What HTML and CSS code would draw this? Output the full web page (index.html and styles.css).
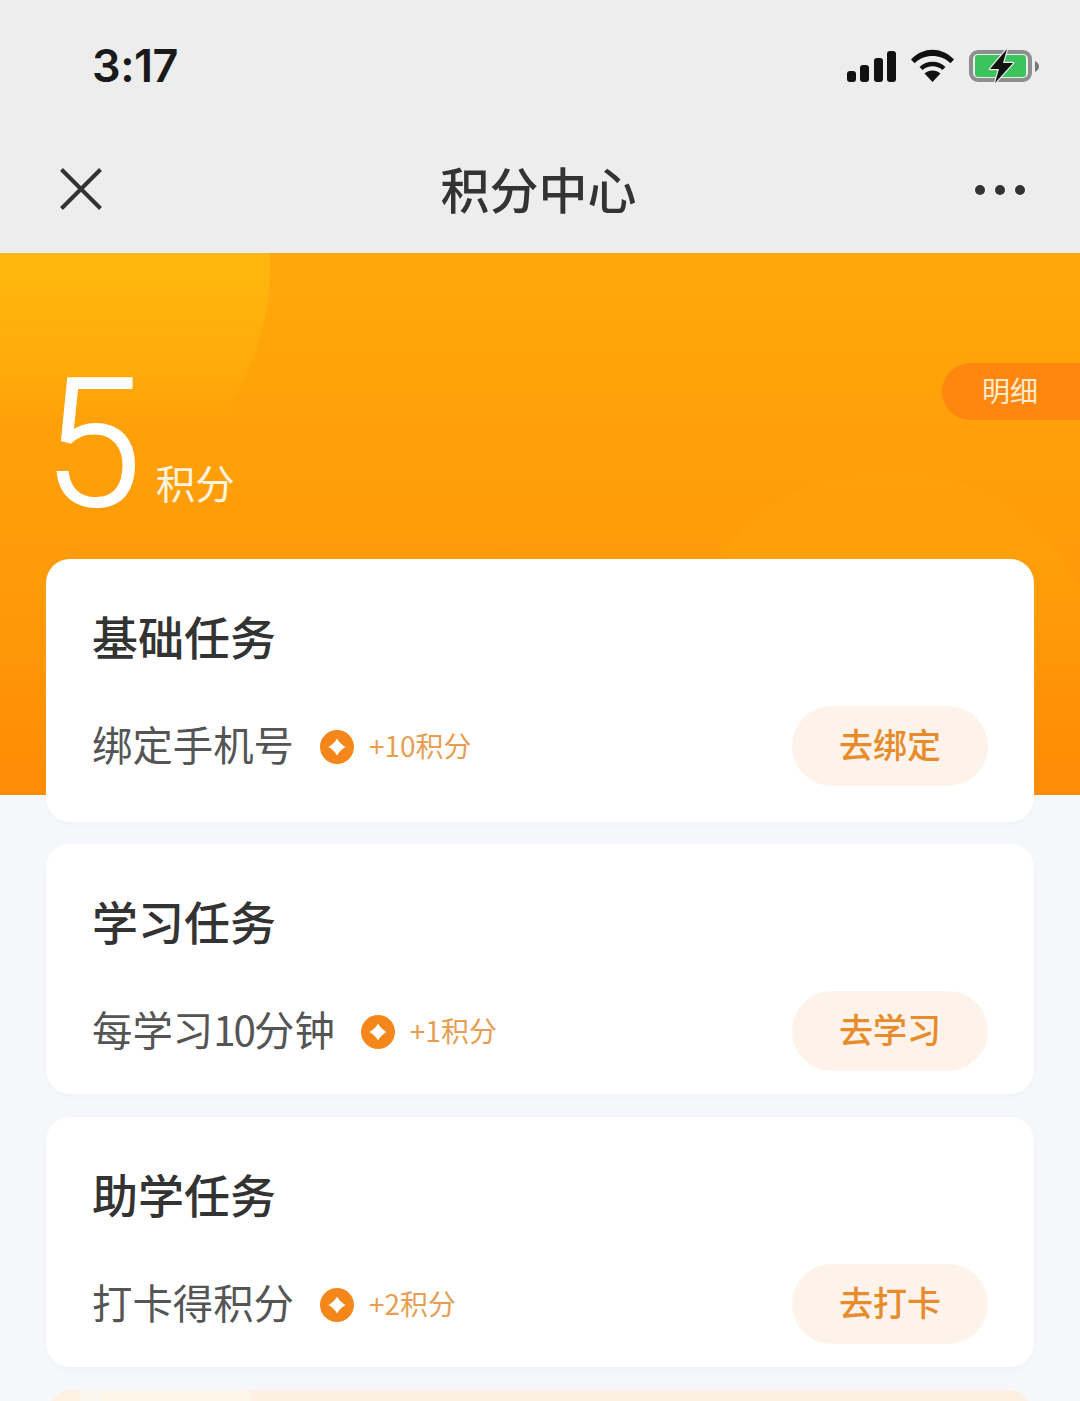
FILE: index.html
```html
<!DOCTYPE html>
<html lang="zh-CN">
<head>
    <meta charset="UTF-8">
    <meta name="viewport" content="width=device-width, initial-scale=1.0">
    <title>积分中心</title>
    <link rel="stylesheet" href="styles.css">
</head>
<body>
    <header class="top">
        <div class="status-bar">
            <span class="clock">3:17</span>
            <div class="status-icons">
                <svg class="icon-signal" width="49" height="31" viewBox="0 0 49 31">
                    <rect x="0" y="20" width="9" height="11" rx="3"/>
                    <rect x="13" y="14" width="9" height="17" rx="3"/>
                    <rect x="27" y="7" width="9" height="24" rx="3"/>
                    <rect x="40" y="0" width="9" height="31" rx="3"/>
                </svg>
                <svg class="icon-wifi" width="43" height="33" viewBox="0 0 43 33">
                    <path d="M21.5 33 L13.5 24.5 C18 20.5 25 20.5 29.5 24.5 Z"/>
                    <path d="M8.5 19.5 L11.6 22.6 C17 17.6 26 17.6 31.4 22.6 L34.5 19.5 C27.5 12.6 15.5 12.6 8.5 19.5 Z" transform="translate(0 -1.5)"/>
                    <path d="M0 10.5 L3.6 14.2 C13.5 4.6 29.5 4.6 39.4 14.2 L43 10.5 C31 -2.6 12 -2.6 0 10.5 Z"/>
                </svg>
                <svg class="icon-battery" width="70" height="34" viewBox="0 0 70 34">
                    <rect x="2" y="3" width="59" height="28" rx="7" fill="none" stroke="#8e8e8e" stroke-width="4"/>
                    <rect x="6" y="6" width="51" height="22" rx="3" fill="#3cc45c"/>
                    <path d="M66 12 C68.5 13 70 15 70 17.5 C70 20 68.5 22 66 23 Z" fill="#777"/>
                    <path d="M38 0 L21 20 L30 20 L26 34 L44 14 L34 14 Z" fill="#111" stroke="#eaeaea" stroke-width="2.5" stroke-linejoin="round" paint-order="stroke"/>
                </svg>
            </div>
        </div>
        <nav class="nav-bar">
            <svg class="icon-close" width="42" height="42" viewBox="0 0 42 42">
                <path d="M1.5 1.5 L40.5 40.5 M40.5 1.5 L1.5 40.5"/>
            </svg>
            <h1 class="nav-title">积分中心</h1>
            <svg class="icon-more" width="50" height="10" viewBox="0 0 50 10">
                <circle cx="5" cy="5" r="5"/>
                <circle cx="25" cy="5" r="5"/>
                <circle cx="45" cy="5" r="5"/>
            </svg>
        </nav>
    </header>

    <section class="hero">
        <div class="hero-circle-left"></div>
        <div class="hero-circle-right"></div>
        <div class="score">
            <span class="score-num">5</span>
            <span class="score-unit">积分</span>
        </div>
        <a class="detail-pill">明细</a>
    </section>

    <main class="cards">
        <section class="card card-first">
            <h2 class="card-title">基础任务</h2>
            <div class="task">
                <span class="task-name">绑定手机号</span>
                <svg class="coin" width="34" height="34" viewBox="0 0 34 34">
                    <circle cx="17" cy="17" r="17" fill="#f5861a"/>
                    <path d="M17 8.5 Q20 14 25.5 17 Q20 20 17 25.5 Q14 20 8.5 17 Q14 14 17 8.5 Z" fill="#fff"/>
                </svg>
                <span class="task-points">+10积分</span>
                <a class="task-btn">去绑定</a>
            </div>
        </section>
        <section class="card">
            <h2 class="card-title">学习任务</h2>
            <div class="task">
                <span class="task-name">每学习<span class="digits">10</span>分钟</span>
                <svg class="coin" width="34" height="34" viewBox="0 0 34 34">
                    <circle cx="17" cy="17" r="17" fill="#f5861a"/>
                    <path d="M17 8.5 Q20 14 25.5 17 Q20 20 17 25.5 Q14 20 8.5 17 Q14 14 17 8.5 Z" fill="#fff"/>
                </svg>
                <span class="task-points">+1积分</span>
                <a class="task-btn">去学习</a>
            </div>
        </section>
        <section class="card">
            <h2 class="card-title">助学任务</h2>
            <div class="task">
                <span class="task-name">打卡得积分</span>
                <svg class="coin" width="34" height="34" viewBox="0 0 34 34">
                    <circle cx="17" cy="17" r="17" fill="#f5861a"/>
                    <path d="M17 8.5 Q20 14 25.5 17 Q20 20 17 25.5 Q14 20 8.5 17 Q14 14 17 8.5 Z" fill="#fff"/>
                </svg>
                <span class="task-points">+2积分</span>
                <a class="task-btn">去打卡</a>
            </div>
        </section>
        <div class="card-peek"></div>
    </main>
</body>
</html>
```

FILE: styles.css
```css
html, body {
    height: 1401px;
    overflow: hidden;
}
body {
    margin: 0;
    background-color: #f5f7fb;
    font-family: "Noto Sans CJK SC", "Noto Sans", sans-serif;
    color: #333;
}
h1, h2 {
    margin: 0;
}

.top {
    height: 253px;
    background-color: #ededed;
}
.status-bar {
    height: 130px;
    display: flex;
    justify-content: space-between;
    padding: 0 41px 0 92px;
    box-sizing: border-box;
}
.clock {
    font-family: Inter, sans-serif;
    font-size: 45px;
    font-weight: 600;
    line-height: 56px;
    margin-top: 38px;
    letter-spacing: -0.5px;
    color: #1a1a1a;
}
.status-icons {
    display: flex;
    align-items: flex-start;
    padding-top: 49px;
}
.icon-signal {
    fill: #111;
    margin-top: 2px;
    margin-right: 15px;
}
.icon-wifi {
    fill: #111;
    margin-right: 15px;
}
.nav-bar {
    height: 123px;
    display: flex;
    align-items: center;
    justify-content: space-between;
    padding: 0 55px 6px 60px;
    box-sizing: border-box;
}
.icon-close path {
    fill: none;
    stroke: #333;
    stroke-width: 4;
}
.icon-more {
    fill: #333;
    margin-top: 3px;
}
.nav-title {
    font-size: 49px;
    font-weight: 500;
    line-height: 60px;
    margin-top: -2px;
    color: #333;
}

.hero {
    position: relative;
    height: 542px;
    overflow: hidden;
    background: linear-gradient(180deg, #ffa80b 0%, #ffa00a 35%, #ff9b09 60%, #ff8b06 100%);
}
.hero-circle-left {
    position: absolute;
    left: -230px;
    top: -235px;
    width: 500px;
    height: 500px;
    border-radius: 50%;
    background: linear-gradient(180deg, #ffbb0d 40%, rgba(255, 170, 11, 0) 82%);
}
.hero-circle-right {
    position: absolute;
    left: 680px;
    top: 217px;
    width: 420px;
    height: 420px;
    border-radius: 50%;
    background: linear-gradient(180deg, #ffa10a 0%, rgba(255, 161, 10, 0) 50%);
}
.score {
    position: relative;
    display: flex;
    align-items: flex-end;
    padding: 81px 0 0 43px;
    color: #fff;
}
.score-num {
    font-family: Roboto, sans-serif;
    font-size: 178px;
    font-weight: 300;
    line-height: 220px;
    -webkit-text-stroke: 2px #fff;
}
.score-unit {
    font-size: 39.5px;
    line-height: 50px;
    margin-left: 14px;
    margin-bottom: 47px;
    color: #fff4e0;
}
.detail-pill {
    position: absolute;
    right: 0;
    top: 110px;
    width: 138px;
    height: 57px;
    box-sizing: border-box;
    padding-left: 40px;
    line-height: 54px;
    font-size: 28px;
    color: #ffeccf;
    background-color: #ff860f;
    border-radius: 29px 0 0 29px;
}

.cards {
    position: relative;
    margin-top: -236px;
    padding: 0 46px;
    display: flex;
    flex-direction: column;
    gap: 23px;
}
.card {
    height: 250px;
    box-sizing: border-box;
    padding: 45px 46px 0;
    background-color: #fff;
    border-radius: 24px;
    box-shadow: 0 4px 6px -3px rgba(225, 230, 240, 0.4);
}
.card-first {
    height: 263px;
    margin-bottom: -1px;
}
.card-title {
    font-size: 46px;
    font-weight: 500;
    line-height: 62px;
    color: #333;
}
.task {
    display: flex;
    align-items: center;
    margin-top: 40px;
    height: 80px;
}
.task-name {
    font-size: 40.4px;
    line-height: 80px;
    padding-bottom: 4px;
    color: #555;
}
.digits {
    letter-spacing: -2px;
}
.coin {
    margin-left: 26px;
    margin-top: 2px;
    flex-shrink: 0;
}
.task-points {
    margin-left: 15px;
    padding-bottom: 2px;
    font-size: 28px;
    color: #e89e52;
}
.task-btn {
    margin-left: auto;
    width: 196px;
    height: 80px;
    line-height: 76px;
    text-align: center;
    font-size: 34px;
    font-weight: 500;
    color: #e88b2a;
    background-color: #fdf3ea;
    border-radius: 40px;
}
.card-peek {
    height: 60px;
    margin: 0 4px;
    border-radius: 20px 20px 0 0;
    background: linear-gradient(90deg, #fdf2e2 0, #fdf2e2 30px, #fbf6ee 30px, #fbf6ee 52px, #fdf5e8 52px, #fdf5e8 200px, #fdf0e2 200px);
}
```
